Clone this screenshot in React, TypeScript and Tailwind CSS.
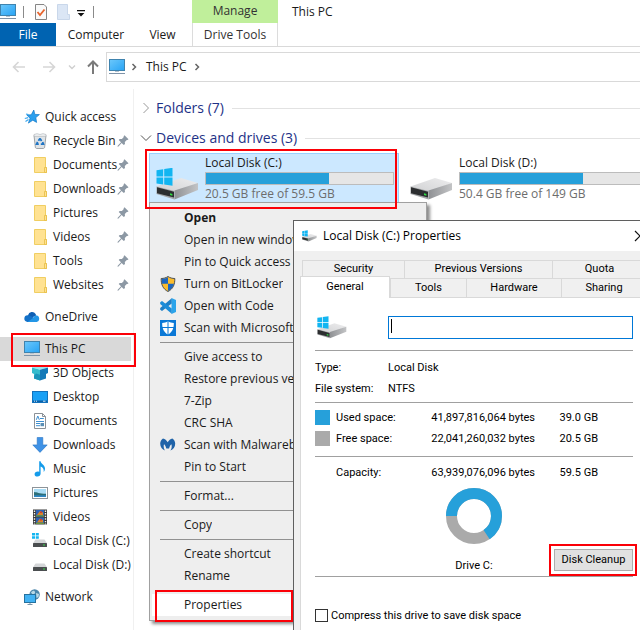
import { useState, type ReactNode } from 'react'

interface IconProps {
  className?: string
}

function MonitorIcon({ className = 'w-4 h-4' }: IconProps) {
  return (
    <svg viewBox="0 0 16 16" className={className} aria-hidden="true">
      <defs>
        <linearGradient id="screen" x1="0" y1="0" x2="1" y2="1">
          <stop offset="0" stopColor="#6cc8fb" />
          <stop offset="1" stopColor="#27a3f5" />
        </linearGradient>
      </defs>
      <rect x="0.5" y="0.5" width="15" height="11" fill="url(#screen)" stroke="#3f83ae" />
      <rect x="0" y="14" width="16" height="1" fill="#7f93a8" />
      <rect x="6" y="12" width="4" height="1" fill="#b5c2cf" />
    </svg>
  )
}

function StarIcon() {
  return (
    <svg viewBox="0 0 16 16" className="w-4 h-4" aria-hidden="true">
      <path d="M9.8 1l1 4.4 4.6.2-3.6 3 .8 4.8-3.8-2.2-4.4 2.9 1.7-4.9L2.8 6l4.4-.2z" fill="#2a9fee" stroke="#1279c7" strokeWidth="0.7" />
      <path d="M.8 9.5l3.4-.8M1.500 12.500l3-2M2 5l2.500.6" stroke="#3da9f0" strokeWidth="1.2" />
    </svg>
  )
}

function RecycleIcon() {
  return (
    <svg viewBox="0 0 16 16" className="w-4 h-4" aria-hidden="true">
      <path d="M2 2.5l1.4 12.2 1.2.8h6.8l1.2-.8L14 2.5z" fill="#dfe3e6" stroke="#8a9095" strokeWidth="0.8" />
      <path d="M2 1.5l3-.8 3 .8 3-.8 3 .8v1.8H2z" fill="#f3f5f6" stroke="#a7adb2" strokeWidth="0.6" />
      <path d="M8 5.6l1.600 2.400M10.600 9l.8 2.200H8.800M6.800 11.200H4.600L5.600 8.900M6.400 7.800L8 5.600" fill="none" stroke="#1e74c4" strokeWidth="1.8" />
    </svg>
  )
}

function FolderIcon() {
  return (
    <svg viewBox="0 0 16 16" className="w-4 h-4" aria-hidden="true">
      <path d="M2.500.5h11v10h1v5h-12z" fill="#ffe292" stroke="#f0ce62" />
      <path d="M12.500 10.500h2v5h-2z" fill="#ffe292" stroke="#e6bd45" strokeWidth="0.8" />
    </svg>
  )
}

function PinIcon() {
  return (
    <svg viewBox="0 0 12 12" className="w-3 h-3 mr-1 shrink-0" aria-hidden="true">
      <path d="M6.6 1.2l.9-.9 4 4-1 .8-.7-.1-2 2 .2 2-1.2 1.1L4.6 8 1.5 11.4l-1 .3.2-1L4 7.3 1.7 5l1-1 2.2.1 1.9-2z" fill="#8c98a4" />
    </svg>
  )
}

function CloudIcon() {
  return (
    <svg viewBox="0 0 16 16" className="w-4 h-4" aria-hidden="true">
      <path d="M4 6.2A4.2 4.2 0 0 1 11.6 5l.6 1.4L5 10z" fill="#0f5fb4" />
      <path d="M3.5 13A3.4 3.4 0 0 1 4 6.2c2 0 3.6 1 5.4 2.4L12 13z" fill="#1371c8" />
      <path d="M3.600 13l5.400-4c1.5-2.6 3-2.8 4.2-2.4a3.4 3.4 0 0 1-.4 6.4z" fill="#2396e6" />
    </svg>
  )
}

function CubeIcon() {
  return (
    <svg viewBox="0 0 16 16" className="w-4 h-4" aria-hidden="true">
      <path d="M0 2.5L8 .4l8 2.1-8 2.3z" fill="#9ae6ee" />
      <path d="M0 2.5l8 2.3v10.8l-6-2.2V9L0 8z" fill="#35bccd" />
      <path d="M16 2.5L8 4.8v10.8l6-2.2V9l2-1z" fill="#1479b8" />
      <path d="M4 8.4l4 1.4v5.8l-6-2.2V11z" fill="#1b95ba" />
    </svg>
  )
}

function DesktopIcon() {
  return (
    <svg viewBox="0 0 16 16" className="w-4 h-4" aria-hidden="true">
      <rect x="0.5" y="2.5" width="15" height="11" fill="#19a0f5" stroke="#1272bd" />
      <rect x="1" y="11.5" width="14" height="1.5" fill="#0c5fa5" />
      <path d="M2 12.2h1m1 0h1m6 0h2.5" stroke="#d6efff" strokeWidth="1" />
    </svg>
  )
}

function DocumentIcon() {
  return (
    <svg viewBox="0 0 16 16" className="w-4 h-4" aria-hidden="true">
      <path d="M2.5.5h8l3 3v12h-11z" fill="#fff" stroke="#8b9197" />
      <path d="M10.5.5v3h3" fill="none" stroke="#8b9197" />
      <path d="M4.3 6.8L5.8 3l1.5 3.8M8 5.5h3.8M4 8.5h8M4 10.5h4M4 12.7h4" fill="none" stroke="#3e8fd0" strokeWidth="1" />
      <rect x="8.5" y="10" width="3.5" height="3.2" fill="#5b8fb5" />
    </svg>
  )
}

function DownloadIcon() {
  return (
    <svg viewBox="0 0 16 16" className="w-4 h-4" aria-hidden="true">
      <path d="M5.2.5h5.6v7.4h4.4L8 15.4.8 7.9h4.4z" fill="#3f92e6" stroke="#2773c2" strokeWidth="0.6" />
    </svg>
  )
}

function MusicIcon() {
  return (
    <svg viewBox="0 0 16 16" className="w-4 h-4" aria-hidden="true">
      <path d="M7.2.3h1.4c.2 2.6 4.4 3.6 4.4 7.2 0 1.4-.5 2.6-1.3 3.5.4-3-.8-4.6-3.1-5.4v7.2c0 1.6-1.4 2.8-3.2 2.8s-2.800-1-2.800-2.400 1.400-2.600 3.200-2.600c.5 0 1 .1 1.400.3z" fill="#149bea" />
    </svg>
  )
}

function PictureIcon() {
  return (
    <svg viewBox="0 0 16 16" className="w-4 h-4" aria-hidden="true">
      <rect x="0.5" y="2.5" width="15" height="11" fill="#fff" stroke="#8d9499" />
      <rect x="2" y="4" width="12" height="8" fill="#a9dcf5" />
      <path d="M2 7c3 .2 5 1.600 12 1.800V12H2z" fill="#2d6f78" />
      <path d="M2 10.300h12V12H2z" fill="#2e87c4" />
    </svg>
  )
}

function VideoIcon() {
  return (
    <svg viewBox="0 0 16 16" className="w-4 h-4" aria-hidden="true">
      <rect x="1" y="0.5" width="14" height="15" fill="#3a3a3a" />
      <path d="M2.5 1.500v14M13.5 1.500v14" stroke="#f2f2f2" strokeWidth="1.4" strokeDasharray="1.4 1.2" />
      <rect x="4" y="1" width="8" height="6.5" fill="#2d62b5" />
      <rect x="4" y="8.5" width="8" height="6.5" fill="#2d62b5" />
      <path d="M6 4.500l2-2.500 3 1.500v2.500H5zM6 12l2-2.500 3 1.500v2.500H5z" fill="#d9822b" />
      <path d="M8 2.500h2v1.500H8zM8 10h2v1.500H8z" fill="#cf3c32" />
      <path d="M4 6.200h8v1.300H4zM4 13.700h8V15H4z" fill="#6c9a3e" />
    </svg>
  )
}

function NetworkIcon() {
  return (
    <svg viewBox="0 0 16 16" className="w-4 h-4" aria-hidden="true">
      <circle cx="10.6" cy="5.5" r="5.2" fill="#4b86ab" />
      <path d="M7 3.500c2-2.500 3.500-1.800 4-.5s-1 2.500-2.500 2.500zM12 4l3 1-.5 3-2 1z" fill="#b9d9e6" />
      <rect x="0.5" y="5.5" width="11" height="8" fill="#42b2f3" stroke="#26719e" />
      <path d="M3.500 15.500h5M6 14v1" stroke="#7b95a8" />
    </svg>
  )
}

// small drive glyph for the navigation pane
function SmallDriveIcon({ windows = false }: { windows?: boolean }) {
  return (
    <svg viewBox="0 0 16 16" className="w-4 h-4" aria-hidden="true">
      {windows && <path d="M0 0h3v2.500H0zM3.800 0h3v2.500h-3zM0 3.300h3v2.500H0zM3.800 3.300h3v2.500h-3z" fill="#12b5f1" />}
      <path d="M3.500 6.500h9l2.300 3.500H1.200z" fill="#d4d6d8" />
      <rect x="1" y="10" width="14" height="4" rx="0.5" fill="#4b4e50" />
      <rect x="11" y="11.5" width="2" height="1" fill="#37d647" />
    </svg>
  )
}

function DriveIcon({ windows = false, className = 'w-[43px] h-8' }: IconProps & { windows?: boolean }) {
  return (
    <svg viewBox="0 0 43 32" className={className} aria-hidden="true">
      <defs>
        <linearGradient id="driveTop" x1="0" y1="1" x2="1" y2="0">
          <stop offset="0" stopColor="#cfd0d2" />
          <stop offset="1" stopColor="#ededee" />
        </linearGradient>
        <linearGradient id="driveSide" x1="0" y1="0" x2="1" y2="0">
          <stop offset="0" stopColor="#8f9194" />
          <stop offset="1" stopColor="#c3c4c6" />
        </linearGradient>
      </defs>
      <path d="M0.5 18.500L25 10l17 5-23.500 9.500z" fill="url(#driveTop)" />
      <path d="M18.500 22.500L42 15v7L18.500 31.500z" fill="url(#driveSide)" />
      <path d="M0.5 18.500l18 4.500v8.500l-18-5.500z" fill="#a2a4a6" />
      <path d="M1 19.300l17 4.500v5.800L1 25.200z" fill="#2c2e30" />
      <path d="M14 25.300l2.400.7v1.800l-2.400-.7z" fill="#2fe043" />
      {windows && (
        <path d="M0.500 2.200l6.700-1v7.300H.5zM8.200 1l8.300-1.200v8.700H8.200zM.5 9.500h6.700v7L.5 15.600zM8.200 9.500h8.300v8.200l-8.300-1.100z" fill="#12b5f1" />
      )}
    </svg>
  )
}

function ShieldIcon() {
  return (
    <svg viewBox="0 0 16 16" className="w-4 h-4" aria-hidden="true">
      <path d="M8 .5c2 1.400 4.300 2 6.800 2 .2 6-1.800 10.500-6.800 13C3 13 1 8.500 1.200 2.500 3.700 2.500 6 1.900 8 .5z" fill="#fbbc2c" stroke="#4a4f55" />
      <path d="M8 1.300V7.800H2C1.700 6.500 1.700 4.800 1.700 3c2.300 0 4.300-.5 6.300-1.700zM8 7.800h6c-.8 3.400-2.800 5.700-6 7.200z" fill="#1b66c0" />
    </svg>
  )
}

function CodeIcon() {
  return (
    <svg viewBox="0 0 16 16" className="w-4 h-4" aria-hidden="true">
      <path d="M11.500 0L16 2v12l-4.500 2z" fill="#2ba4ea" />
      <path d="M11.700.200v5.200L2 13.100.200 11.700V10z" fill="#1d7fc6" />
      <path d="M11.700 15.800v-5.200L2 2.900.200 4.300V6z" fill="#1b8cd8" />
    </svg>
  )
}

function DefenderIcon() {
  return (
    <svg viewBox="0 0 16 16" className="w-4 h-4" aria-hidden="true">
      <rect width="16" height="16" fill="#0a78d6" />
      <path d="M8 1.200c1.700 1.200 3.700 1.700 5.800 1.700.2 5.300-1.600 9.200-5.800 11.600C3.800 12.100 2 8.200 2.200 2.900 4.300 2.900 6.300 2.400 8 1.200z" fill="#fff" />
      <path d="M8 1v14M2 7.500h12" stroke="#0a78d6" />
    </svg>
  )
}

function MalwareIcon() {
  return (
    <svg viewBox="0 0 16 16" className="w-4 h-4" aria-hidden="true">
      <path
        d="M3 1.500C5 2 6.600 3.300 7.700 5.200 8.800 3.300 10.400 2 12.400 1.500c1.800 1.200 2.800 3.100 2.800 5.300 0 3.200-2 5.900-4.800 6.700.9-1.200 1.400-2.600 1.300-4.500 0-.7-.1-1.300-.4-1.800-1 1-1.800 2.400-2.200 4.300H6.300C5.900 9.600 5.100 8.200 4.100 7.200c-.3.500-.4 1.100-.4 1.800-.1 1.900.4 3.300 1.300 4.500C2.200 12.700.2 10 .2 6.800.2 4.600 1.200 2.700 3 1.500z"
        fill="#1f63a8"
      />
    </svg>
  )
}

// red marker frame drawn over its relative parent
function Marker({ className }: { className: string }) {
  return <span className={`absolute z-20 border-2 border-[#fb0007] pointer-events-none ${className}`} />
}

interface NavItem {
  label: string
  icon: ReactNode
  pinned?: boolean
}

const quickAccess: NavItem[] = [
  { label: 'Recycle Bin', icon: <RecycleIcon />, pinned: true },
  { label: 'Documents', icon: <FolderIcon />, pinned: true },
  { label: 'Downloads', icon: <FolderIcon />, pinned: true },
  { label: 'Pictures', icon: <FolderIcon />, pinned: true },
  { label: 'Videos', icon: <FolderIcon />, pinned: true },
  { label: 'Tools', icon: <FolderIcon />, pinned: true },
  { label: 'Websites', icon: <FolderIcon />, pinned: true },
]

const thisPc: NavItem[] = [
  { label: '3D Objects', icon: <CubeIcon /> },
  { label: 'Desktop', icon: <DesktopIcon /> },
  { label: 'Documents', icon: <DocumentIcon /> },
  { label: 'Downloads', icon: <DownloadIcon /> },
  { label: 'Music', icon: <MusicIcon /> },
  { label: 'Pictures', icon: <PictureIcon /> },
  { label: 'Videos', icon: <VideoIcon /> },
  { label: 'Local Disk (C:)', icon: <SmallDriveIcon windows /> },
  { label: 'Local Disk (D:)', icon: <SmallDriveIcon /> },
]

function NavRow({ item, root = false }: { item: NavItem; root?: boolean }) {
  return (
    <a href="#" className={`flex items-center h-6 whitespace-nowrap ${root ? 'pl-6' : 'pl-8'}`}>
      <span className="shrink-0 mr-[5px]">{item.icon}</span>
      <span className="flex-1 min-w-0">{item.label}</span>
      {item.pinned && <PinIcon />}
    </a>
  )
}

const menuGroups: { label: string; icon?: ReactNode; bold?: boolean }[][] = [
  [
    { label: 'Open', bold: true },
    { label: 'Open in new window' },
    { label: 'Pin to Quick access' },
    { label: 'Turn on BitLocker', icon: <ShieldIcon /> },
    { label: 'Open with Code', icon: <CodeIcon /> },
    { label: 'Scan with Microsoft Defender...', icon: <DefenderIcon /> },
  ],
  [
    { label: 'Give access to' },
    { label: 'Restore previous versions' },
    { label: '7-Zip' },
    { label: 'CRC SHA' },
    { label: 'Scan with Malwarebytes', icon: <MalwareIcon /> },
    { label: 'Pin to Start' },
  ],
  [{ label: 'Format...' }],
  [{ label: 'Copy' }],
  [{ label: 'Create shortcut' }, { label: 'Rename' }],
  [{ label: 'Properties' }],
]

function ContextMenu() {
  return (
    <div role="menu" className="absolute left-[149px] top-[202px] w-[278px] z-10 bg-[#eeeeee] border border-[#a0a0a0] py-1 px-0.5 shadow-[3px_3px_3px_rgba(0,0,0,0.45)]">
      {menuGroups.map((group, i) => (
        <div key={i}>
          {i > 0 && <hr className="ml-2 my-[3px] border-[#919191]" />}
          {group.map(item => (
            <div key={item.label} className="relative">
              <button
                role="menuitem"
                className={`flex items-center gap-2 w-full h-[22px] pl-2 whitespace-nowrap ${item.bold ? 'font-bold' : ''} ${
                  item.label === 'Properties' ? 'bg-white' : ''
                }`}
              >
                <span className="w-4 h-4 shrink-0">{item.icon}</span>
                <span className="max-w-[110px] overflow-hidden">{item.label}</span>
              </button>
              {item.label === 'Properties' && <Marker className="left-[3px] -top-1 w-[138px] h-8" />}
            </div>
          ))}
        </div>
      ))}
    </div>
  )
}

function DriveTile({ name, free, used, selected = false }: { name: string; free: string; used: number; selected?: boolean }) {
  return (
    <div
      className={`relative flex items-start w-[250px] h-[58px] shrink-0 pl-[6px] pr-1 border ${
        selected ? 'bg-[#cce8ff] border-[#99d1ff]' : 'border-transparent'
      }`}
    >
      <div className="mt-[14px] mr-[6px]">
        <DriveIcon windows={selected} />
      </div>
      <div className="flex-1 whitespace-nowrap">
        <p className="leading-[18px]">{name}</p>
        <div className="h-[13px] border border-[#bcbcbc] bg-[#e6e6e6]">
          <div className="h-full bg-[#26a0da]" style={{ width: `${used}%` }} />
        </div>
        <p className="leading-[18px] text-[#6d6d6d]">{free}</p>
      </div>
      {selected && <Marker className="-left-[5px] -top-[5px] w-[252px] h-[60px]" />}
    </div>
  )
}

function SectionHeader({ title, open = false }: { title: string; open?: boolean }) {
  return (
    <div className="flex items-center h-[30px]">
      <svg viewBox="0 0 12 12" className="w-3 h-3 mr-1" fill="none" stroke={open ? '#555' : '#999'} aria-hidden="true">
        <path d={open ? 'M1 3.500l5 5 5-5' : 'M3.500 1l5 5-5 5'} />
      </svg>
      <h2 className="text-sm text-[#1e3287] mr-2">{title}</h2>
      <span className="flex-1 h-px bg-[#e2e2e2]" />
    </div>
  )
}

function PropertiesDialog() {
  const [label, setLabel] = useState('')
  const [compress, setCompress] = useState(false)
  const tab = 'border border-[#d9d9d9] border-b-0 border-r-0 bg-[#f0f0f0] text-center'

  return (
    <section
      role="dialog"
      aria-label="Local Disk (C:) Properties"
      className="absolute left-[293px] top-[220px] bottom-0 w-[361px] z-10 flex flex-col bg-[#f0f0f0] border-l border-t border-[#5f5f5f] text-black"
    >
      <header className="flex items-center h-[30px] bg-white px-2 shrink-0">
        <DriveIcon windows className="w-[15px] h-3 mr-[6px]" />
        <h1 className="flex-1">Local Disk (C:) Properties</h1>
        <button aria-label="Close" className="w-3 h-3">
          <svg viewBox="0 0 12 12" className="w-3 h-3" stroke="#111" strokeWidth="1.2" aria-hidden="true">
            <path d="M1 1l10 10M11 1L1 11" />
          </svg>
        </button>
      </header>

      <div className="flex-1 flex flex-col pt-[9px] px-[6px] font-['Roboto','Liberation_Sans',sans-serif] text-[11px]">
        <div role="tablist" className="px-0.5">
          <div className="flex h-[18px]">
            <button role="tab" className={`w-[102px] ${tab}`}>Security</button>
            <button role="tab" className={`w-[148px] ${tab}`}>Previous Versions</button>
            <button role="tab" className={`flex-1 ${tab}`}>Quota</button>
          </div>
          <div className="flex h-[19px]">
            <button role="tab" aria-selected="true" className="relative z-10 w-[90px] h-[22px] -mt-0.5 -ml-0.5 bg-white border border-b-0 border-[#d9d9d9]">
              General
            </button>
            <button role="tab" className={`w-[76px] ${tab}`}>Tools</button>
            <button role="tab" className={`w-[95px] ${tab}`}>Hardware</button>
            <button role="tab" className={`flex-1 ${tab}`}>Sharing</button>
          </div>
        </div>

        <div role="tabpanel" className="flex-1 bg-white border border-b-0 border-[#d9d9d9] px-[14px] pt-[18px]">
          <div className="flex items-center">
            <DriveIcon windows className="w-[30px] h-[23px] ml-0.5 mr-[41px]" />
            <div className="relative flex-1">
              <input
                aria-label="Volume label"
                value={label}
                onChange={e => setLabel(e.target.value)}
                className="block w-full h-[23px] px-1 border border-[#0078d7] bg-white outline-none caret-transparent"
              />
              <span className="absolute left-[3px] top-[3px] w-px h-[14px] bg-black" />
            </div>
          </div>

          <hr className="mt-[11px] border-[#a0a0a0]" />
          <dl className="grid grid-cols-[73px_1fr] leading-[21px] mt-[6px] mb-[3px]">
            <dt>Type:</dt>
            <dd>Local Disk</dd>
            <dt>File system:</dt>
            <dd>NTFS</dd>
          </dl>

          <hr className="border-[#a0a0a0]" />
          <table className="leading-[21px] mt-1">
            <tbody>
              <tr>
                <td className="w-[21px]"><span className="block w-[15px] h-[15px] bg-[#26a0da]" /></td>
                <td className="w-[87px]">Used space:</td>
                <td className="w-[112px] text-right">41,897,816,064 bytes</td>
                <td className="w-[63px] text-right">39.0 GB</td>
              </tr>
              <tr>
                <td><span className="block w-[15px] h-[15px] bg-[#aaaaaa]" /></td>
                <td>Free space:</td>
                <td className="text-right">22,041,260,032 bytes</td>
                <td className="text-right">20.5 GB</td>
              </tr>
            </tbody>
          </table>

          <hr className="mt-[7px] border-[#a0a0a0]" />
          <table className="leading-[21px] mt-[5px]">
            <tbody>
              <tr>
                <td className="w-[21px]" />
                <td className="w-[87px]">Capacity:</td>
                <td className="w-[112px] text-right">63,939,076,096 bytes</td>
                <td className="w-[63px] text-right">59.5 GB</td>
              </tr>
            </tbody>
          </table>

          <svg viewBox="0 0 56 56" className="w-14 h-14 mx-auto mt-[5px]" fill="none" strokeWidth="11" aria-hidden="true">
            <circle cx="28" cy="28" r="22.5" stroke="#aaaaaa" />
            <circle cx="28" cy="28" r="22.5" stroke="#26a0da" pathLength="100" strokeDasharray="65.5 34.5" transform="rotate(180 28 28)" />
          </svg>

          <div className="grid grid-cols-3 h-[27px] mt-[5px]">
            <p className="col-start-2 text-center leading-[21px] pt-[6px]">Drive C:</p>
            <div className="relative justify-self-end">
              <button className="block w-[79px] h-[22px] bg-[#e1e1e1] border border-[#adadad]">Disk Cleanup</button>
              <Marker className="-left-[5px] -right-1 -top-[5px] h-8" />
            </div>
          </div>

          <hr className="border-[#a0a0a0]" />
          <label className="flex items-center gap-[3px] mt-8 leading-[13px]">
            <input
              type="checkbox"
              checked={compress}
              onChange={e => setCompress(e.target.checked)}
              className="appearance-none w-[13px] h-[13px] border border-[#333] bg-white checked:bg-[#0078d7]"
            />
            Compress this drive to save disk space
          </label>
        </div>
      </div>
    </section>
  )
}

export default function App() {
  return (
    <div className="relative min-h-screen overflow-hidden flex flex-col bg-white text-[#1a1a1a] text-xs font-['Open_Sans','Noto_Sans',sans-serif]">
      {/* Title bar and ribbon tabs */}
      <header className="flex h-[47px] border-b border-[#d9d9d9] shrink-0">
        <div className="w-48 shrink-0">
          <div className="flex items-center h-[23px]">
            <MonitorIcon />
            <span className="w-px h-3 bg-[#8a8a8a] ml-[7px] mr-[11px]" />
            <svg viewBox="0 0 12 16" className="w-3 h-4" fill="none" aria-hidden="true">
              <path d="M.5.500h8.500l2.500 2.500v12.500H.5z" fill="#fafafa" stroke="#858585" />
              <path d="M2.500 8l2.500 3 4.500-5.500" stroke="#e8642c" strokeWidth="1.8" />
            </svg>
            <svg viewBox="0 0 13 16" className="w-[13px] h-4 ml-[10px]" aria-hidden="true">
              <path d="M.5.500h10v10h2v5H.5z" fill="#dbe6f5" stroke="#c9d7ea" />
            </svg>
            <svg viewBox="0 0 8 8" className="w-2 h-2 ml-[7px] mt-1" aria-hidden="true">
              <path d="M0 0h8v1.200H0zM.6 3h6.800L4 6.600z" fill="#111" />
            </svg>
            <span className="w-px h-3 bg-[#8a8a8a] ml-2" />
          </div>
          <nav className="flex h-[23px]">
            <button className="w-14 bg-[#0063b1] text-white">File</button>
            <button className="w-20">Computer</button>
            <button className="w-[53px]">View</button>
          </nav>
        </div>
        <div className="w-[86px] shrink-0 text-center text-[#333]">
          <div className="h-[23px] leading-[21px] bg-[#c0ef9b]">Manage</div>
          <button className="w-full h-[23px] border-x border-[#dcdcdc]">Drive Tools</button>
        </div>
        <p className="pl-[14px] leading-[23px]">This PC</p>
      </header>

      {/* Navigation buttons and address */}
      <div className="flex items-center mt-[5px] h-[30px] shrink-0">
        <div className="flex items-center w-[106px] shrink-0 pl-3">
          <button aria-label="Back" className="mr-4">
            <svg viewBox="0 0 14 12" className="w-[14px] h-3" fill="none" stroke="#d6d6d6" strokeWidth="1.6" aria-hidden="true">
              <path d="M6.500 1L1.500 6l5 5M1.500 6H13" />
            </svg>
          </button>
          <button aria-label="Forward" className="mr-3">
            <svg viewBox="0 0 14 12" className="w-[14px] h-3" fill="none" stroke="#d6d6d6" strokeWidth="1.6" aria-hidden="true">
              <path d="M7.500 1l5 5-5 5M12.500 6H1" />
            </svg>
          </button>
          <button aria-label="Recent locations" className="mr-[11px]">
            <svg viewBox="0 0 8 8" className="w-2 h-2" fill="none" stroke="#cfcfcf" strokeWidth="1.4" aria-hidden="true">
              <path d="M1 2.500l3 3 3-3" />
            </svg>
          </button>
          <button aria-label="Up">
            <svg viewBox="0 0 12 14" className="w-3 h-[14px]" fill="none" stroke="#7a7a7a" strokeWidth="2" aria-hidden="true">
              <path d="M1 6.500l5-5 5 5M6 2v12" />
            </svg>
          </button>
        </div>
        <div className="flex items-center flex-1 h-full pl-0.5 border border-r-0 border-[#d9d9d9]">
          <MonitorIcon />
          <svg viewBox="0 0 8 8" className="w-2 h-2 ml-[5px] mr-2" fill="none" stroke="#666" strokeWidth="1.5" aria-hidden="true">
            <path d="M2.500 1l3 3-3 3" />
          </svg>
          <a href="#">This PC</a>
          <svg viewBox="0 0 8 8" className="w-2 h-2 ml-[6px]" fill="none" stroke="#666" strokeWidth="1.5" aria-hidden="true">
            <path d="M2.500 1l3 3-3 3" />
          </svg>
        </div>
      </div>

      <div className="flex flex-1 mt-[7px]">
        {/* Navigation pane */}
        <nav className="w-[134px] shrink-0 pt-4 border-r border-[#f0f0f0]">
          <NavRow root item={{ label: 'Quick access', icon: <StarIcon /> }} />
          {quickAccess.map(item => (
            <NavRow key={item.label} item={item} />
          ))}
          <div className="my-2">
            <NavRow root item={{ label: 'OneDrive', icon: <CloudIcon /> }} />
          </div>
          <div className="relative mr-0.5 bg-[#d9d9d9]">
            <NavRow root item={{ label: 'This PC', icon: <MonitorIcon /> }} />
            <Marker className="left-[11px] -right-[5px] -top-1 h-[34px]" />
          </div>
          {thisPc.map(item => (
            <NavRow key={item.label} item={item} />
          ))}
          <div className="mt-2">
            <NavRow root item={{ label: 'Network', icon: <NetworkIcon /> }} />
          </div>
        </nav>

        {/* Drives */}
        <main className="flex-1 min-w-0 pt-1 pl-[6px]">
          <SectionHeader title="Folders (7)" />
          <SectionHeader title="Devices and drives (3)" open />
          <div className="flex gap-1 pl-[9px]">
            <DriveTile name="Local Disk (C:)" free="20.5 GB free of 59.5 GB" used={66} selected />
            <DriveTile name="Local Disk (D:)" free="50.4 GB free of 149 GB" used={66} />
          </div>
        </main>
      </div>

      <ContextMenu />
      <PropertiesDialog />
    </div>
  )
}
